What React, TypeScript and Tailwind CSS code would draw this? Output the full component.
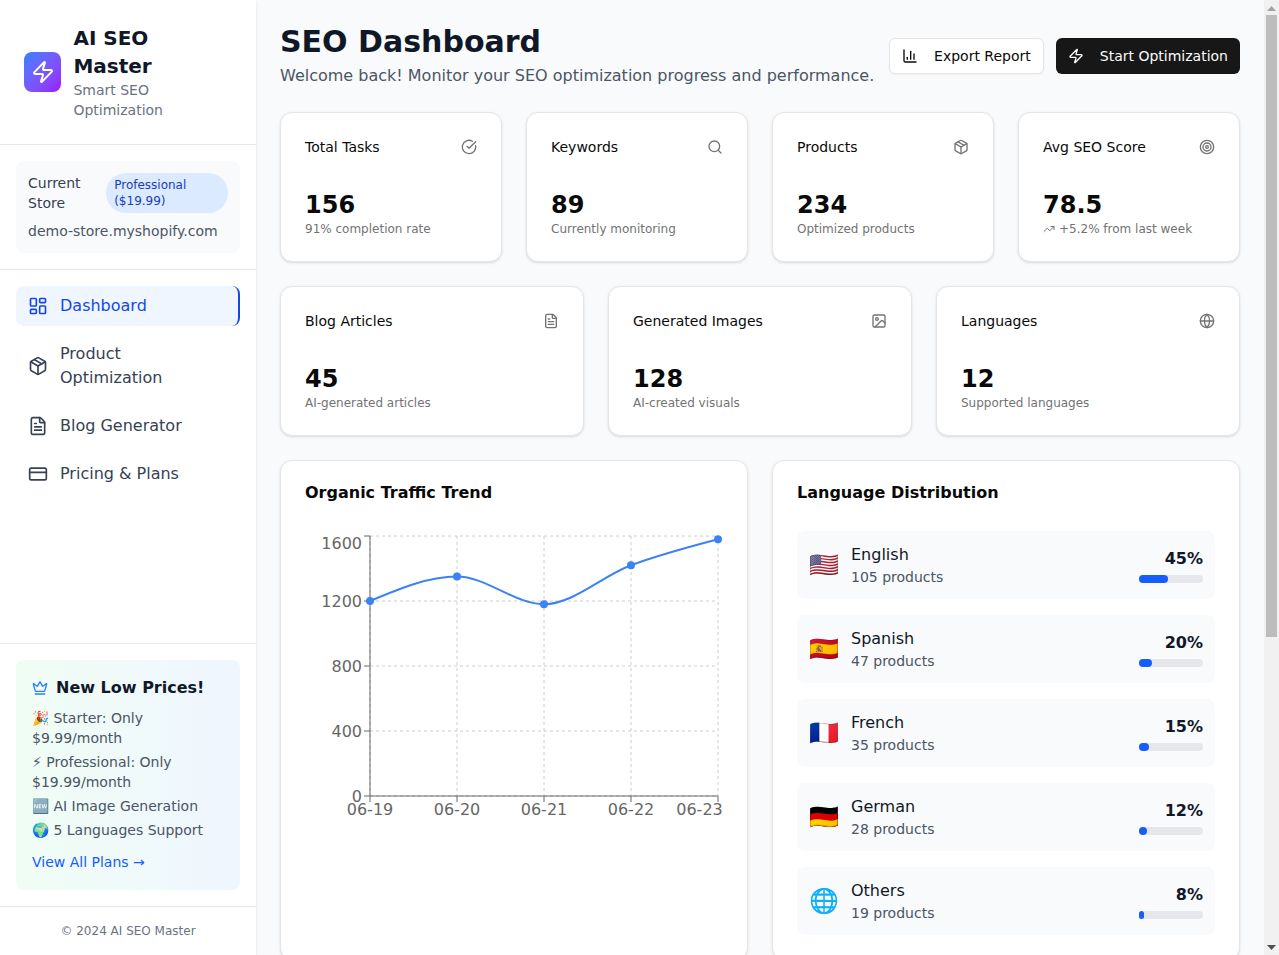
import {
  BarChart3,
  CheckCircle,
  CreditCard,
  Crown,
  FileText,
  Globe,
  Image,
  LayoutDashboard,
  Package,
  Search,
  Target,
  TrendingUp,
  Zap,
} from "lucide-react";

const navItems = [
  { label: "Dashboard", icon: LayoutDashboard, active: true },
  { label: "Product Optimization", icon: Package },
  { label: "Blog Generator", icon: FileText },
  { label: "Pricing & Plans", icon: CreditCard },
];

const topStats = [
  { title: "Total Tasks", value: "156", note: "91% completion rate", icon: CheckCircle },
  { title: "Keywords", value: "89", note: "Currently monitoring", icon: Search },
  { title: "Products", value: "234", note: "Optimized products", icon: Package },
  { title: "Avg SEO Score", value: "78.5", note: "+5.2% from last week", icon: Target, trend: true },
];

const contentStats = [
  { title: "Blog Articles", value: "45", note: "AI-generated articles", icon: FileText },
  { title: "Generated Images", value: "128", note: "AI-created visuals", icon: Image },
  { title: "Languages", value: "12", note: "Supported languages", icon: Globe },
];

const languages = [
  { name: "English", flag: "🇺🇸", products: 105, percent: 45 },
  { name: "Spanish", flag: "🇪🇸", products: 47, percent: 20 },
  { name: "French", flag: "🇫🇷", products: 35, percent: 15 },
  { name: "German", flag: "🇩🇪", products: 28, percent: 12 },
  { name: "Others", flag: "🌐", products: 19, percent: 8 },
];

const recentTasks = [
  { name: "Optimize product titles", status: "Completed" },
  { name: "Generate blog article", status: "Completed" },
  { name: "Translate product pages", status: "Running" },
  { name: "Generate product images", status: "Running" },
  { name: "Keyword research", status: "Queued" },
];

const chartX = [
  { x: 370, label: "06-19" },
  { x: 457, label: "06-20" },
  { x: 544, label: "06-21" },
  { x: 631, label: "06-22" },
  { x: 718, label: "06-23" },
];
const chartY = [
  { y: 796, label: "0" },
  { y: 731, label: "400" },
  { y: 666, label: "800" },
  { y: 601, label: "1200" },
  { y: 536, label: "1600" },
];
const chartPoints = [
  [370, 601],
  [457, 576.6],
  [544, 604.25],
  [631, 565.25],
  [718, 539.25],
];

function StatCard({ stat }: { stat: any }) {
  const Icon = stat.icon;
  return (
    <div className="flex flex-col gap-6 rounded-xl border border-neutral-200 bg-white p-6 text-neutral-950 shadow-sm">
      <div className="flex items-center justify-between pb-2">
        <span className="text-sm font-medium">{stat.title}</span>
        <Icon className="h-4 w-4 text-neutral-500" />
      </div>
      <div>
        <div className="text-2xl font-bold">{stat.value}</div>
        <p className="flex items-center text-xs text-neutral-500">
          {stat.trend && <TrendingUp className="mr-1 h-3 w-3" />}
          {stat.note}
        </p>
      </div>
    </div>
  );
}

function TrafficChart() {
  return (
    <svg width="418" height="300" viewBox="305 531 418 300" className="block">
      <g stroke="#ccc" strokeDasharray="3 3" fill="none">
        {chartY.map((t) => (
          <line key={t.label} x1="370" x2="718" y1={t.y} y2={t.y} />
        ))}
        {chartX.map((t) => (
          <line key={t.label} x1={t.x} x2={t.x} y1="536" y2="796" />
        ))}
      </g>
      <g stroke="#666" fill="none">
        <line x1="370" x2="370" y1="536" y2="796" />
        <line x1="370" x2="718" y1="796" y2="796" />
        {chartY.map((t) => (
          <line key={t.label} x1="364" x2="370" y1={t.y} y2={t.y} />
        ))}
        {chartX.map((t) => (
          <line key={t.label} x1={t.x} x2={t.x} y1="796" y2="802" />
        ))}
      </g>
      <g fill="#666" fontSize="16">
        {chartY.map((t) => (
          <text key={t.label} x="362" y={t.label === "1600" ? 548.5 : t.y + 5.5} textAnchor="end">
            {t.label}
          </text>
        ))}
        {chartX.map((t, i) => (
          <text key={t.label} x={i === 4 ? 699.5 : t.x} y="815" textAnchor="middle">
            {t.label}
          </text>
        ))}
      </g>
      <path
        d="M370,601C399,588.8,428,576.6,457,576.6C486,576.6,515,604.25,544,604.25C573,604.25,602,576.08,631,565.25C660,554.42,689,546.83,718,539.25"
        fill="none"
        stroke="#3b82f6"
        strokeWidth="2"
      />
      {chartPoints.map(([x, y]) => (
        <circle key={x} cx={x} cy={y} r="4" fill="#3b82f6" />
      ))}
    </svg>
  );
}

// the browser shot hides native scrollbars, so the bar is drawn as its own column
function ScrollBar() {
  return (
    <div aria-hidden className="flex h-screen w-[15px] shrink-0 flex-col bg-[#f1f1f1]">
      <div className="flex h-[15px] items-center justify-center">
        <svg width="9" height="5" viewBox="0 0 9 5" className="mt-[1px]">
          <path d="M4.5 0 9 5H0z" fill="#a3a3a3" />
        </svg>
      </div>
      <div className="ml-[2px] mr-[2px] h-[622px] bg-[#bdbdbd]" />
      <div className="mt-auto flex h-[15px] items-center justify-center">
        <svg width="9" height="5" viewBox="0 0 9 5">
          <path d="M0 0h9L4.5 5z" fill="#505050" />
        </svg>
      </div>
    </div>
  );
}

export default function App() {
  return (
    <div className="flex h-screen overflow-hidden bg-gray-50 font-['DejaVu_Sans',sans-serif]">
      <aside className="flex h-screen w-64 shrink-0 flex-col bg-white shadow-sm">
        <div className="flex items-center gap-3 border-b border-gray-200 p-6">
          <div className="flex h-10 w-10 items-center justify-center rounded-lg bg-gradient-to-br from-blue-500 to-purple-600">
            <Zap className="h-6 w-6 text-white" />
          </div>
          <div>
            <h1 className="text-xl font-bold text-gray-900">AI SEO Master</h1>
            <p className="text-sm text-gray-500">Smart SEO Optimization</p>
          </div>
        </div>

        <div className="border-b border-gray-200 p-4">
          <div className="rounded-lg bg-gray-50 p-3">
            <div className="flex items-center justify-between">
              <span className="text-sm text-gray-700">Current Store</span>
              <span className="rounded-full bg-blue-100 px-2 py-1 text-xs text-blue-800">Professional ($19.99)</span>
            </div>
            <p className="mt-2 text-sm text-gray-600">demo-store.myshopify.com</p>
          </div>
        </div>

        <nav className="flex flex-1 flex-col gap-2 p-4">
          {navItems.map((item) => {
            const Icon = item.icon;
            return (
              <a
                key={item.label}
                href="#"
                className={`flex items-center gap-3 rounded-lg px-3 py-2 ${item.active ? "border-r-2 border-blue-700 bg-blue-50 text-blue-700" : "text-gray-700"}`}
              >
                <Icon className="h-5 w-5 shrink-0" />
                <span>{item.label}</span>
              </a>
            );
          })}
        </nav>

        <div className="border-t border-gray-200 p-4">
          <div className="rounded-lg bg-gradient-to-r from-green-50 to-blue-50 p-4">
            <div className="mb-2 flex items-center gap-2">
              <Crown className="h-4 w-4 text-blue-500" />
              <span className="font-semibold text-gray-900">New Low Prices!</span>
            </div>
            <div className="flex flex-col gap-1 text-sm text-gray-600">
              <p>🎉 Starter: Only $9.99/month</p>
              <p>⚡ Professional: Only $19.99/month</p>
              <p>🆕 AI Image Generation</p>
              <p>🌍 5 Languages Support</p>
            </div>
            <a href="#" className="mt-3 mb-0.5 block text-sm text-blue-600">
              View All Plans →
            </a>
          </div>
        </div>

        <div className="border-t border-gray-200 p-4 text-center text-xs text-gray-500">© 2024 AI SEO Master</div>
      </aside>

      <main className="h-screen min-w-0 flex-1 overflow-y-auto p-6">
        <div className="mb-6 flex items-center justify-between">
          <div>
            <h2 className="text-3xl font-bold text-gray-900">SEO Dashboard</h2>
            <p className="mt-1 text-gray-600">Welcome back! Monitor your SEO optimization progress and performance.</p>
          </div>
          <div className="flex items-center gap-3">
            <button className="flex h-9 items-center gap-2 rounded-md border border-neutral-200 bg-white px-3 text-sm text-neutral-950 shadow-xs">
              <BarChart3 className="mr-2 h-4 w-4" />
              Export Report
            </button>
            <button className="flex h-9 items-center gap-2 rounded-md bg-neutral-900 px-3 text-sm text-neutral-50">
              <Zap className="mr-2 h-4 w-4" />
              Start Optimization
            </button>
          </div>
        </div>

        <div className="mb-6 grid grid-cols-4 gap-6">
          {topStats.map((stat) => (
            <StatCard key={stat.title} stat={stat} />
          ))}
        </div>

        <div className="mb-6 grid grid-cols-3 gap-6">
          {contentStats.map((stat) => (
            <StatCard key={stat.title} stat={stat} />
          ))}
        </div>

        <div className="mb-6 grid grid-cols-2 gap-6">
          <div className="flex flex-col gap-6 rounded-xl border border-neutral-200 bg-white p-6 shadow-sm">
            <h3 className="pb-1.5 leading-none font-semibold text-neutral-950">Organic Traffic Trend</h3>
            <TrafficChart />
          </div>

          <div className="flex flex-col gap-6 rounded-xl border border-neutral-200 bg-white p-6 shadow-sm">
            <h3 className="pb-1.5 leading-none font-semibold text-neutral-950">Language Distribution</h3>
            <div className="flex flex-col gap-4">
              {languages.map((lang) => (
                <div key={lang.name} className="flex items-center justify-between rounded-lg bg-gray-50 p-3">
                  <div className="flex items-center gap-3">
                    <span className="text-2xl">{lang.flag}</span>
                    <div>
                      <p className="text-gray-900">{lang.name}</p>
                      <p className="text-sm text-gray-600">{lang.products} products</p>
                    </div>
                  </div>
                  <div className="text-right">
                    <p className="font-semibold text-gray-900">{lang.percent}%</p>
                    <div className="mt-1 h-2 w-16 rounded-full bg-gray-200">
                      <div className="h-2 rounded-full bg-blue-600" style={{ width: `${lang.percent}%` }} />
                    </div>
                  </div>
                </div>
              ))}
            </div>
          </div>
        </div>

        <div className="flex flex-col gap-6 rounded-xl border border-neutral-200 bg-white p-6 shadow-sm">
          <h3 className="pb-1.5 leading-none font-semibold text-neutral-950">Recent Tasks</h3>
          <div className="flex flex-col gap-3.5">
            {recentTasks.map((task) => (
              <div key={task.name} className="flex items-center justify-between rounded-lg bg-gray-50 px-3 py-4 text-sm">
                <span className="text-gray-900">{task.name}</span>
                <span className="text-gray-600">{task.status}</span>
              </div>
            ))}
          </div>
        </div>
      </main>

      <ScrollBar />
    </div>
  );
}
